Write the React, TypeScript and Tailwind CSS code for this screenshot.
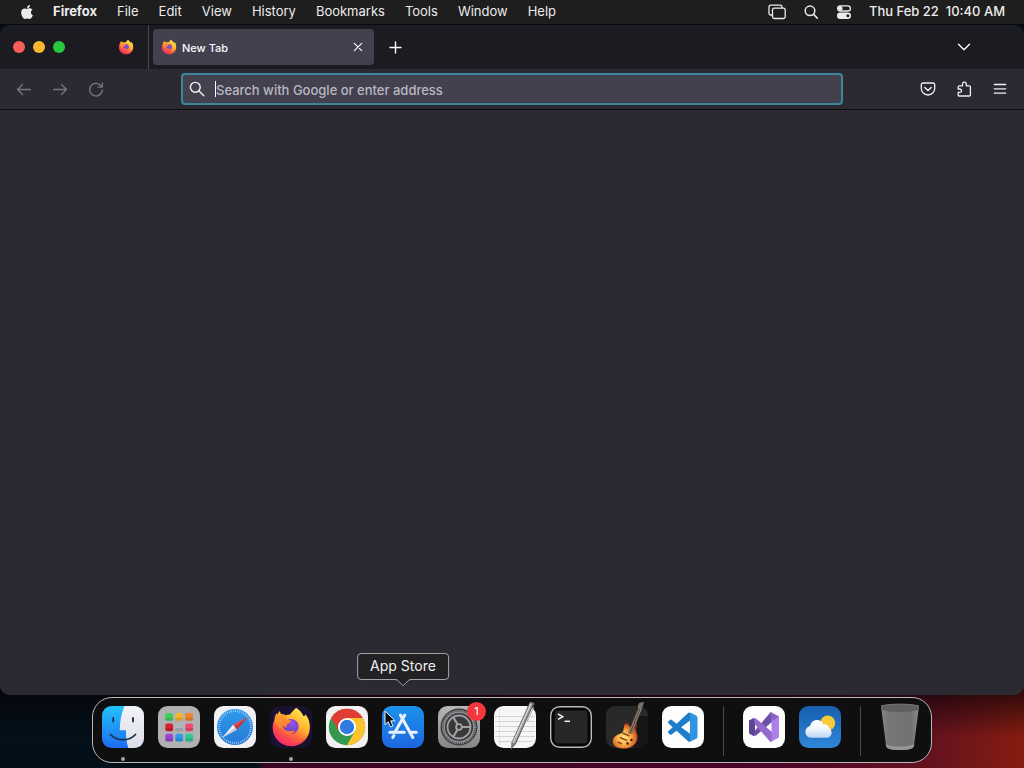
import { useId, type ReactNode } from "react";
import { FaApple } from "react-icons/fa";

const menus = ["File", "Edit", "View", "History", "Bookmarks", "Tools", "Window", "Help"];

function FirefoxLogo({ className }: { className: string }) {
  const id = useId();
  return (
    <svg viewBox="0 0 42 42" className={className} aria-hidden="true">
      <defs>
        <linearGradient id={id + "b"} x1="0.85" y1="0.1" x2="0.3" y2="0.95">
          <stop offset="0" stopColor="#ffe74a" />
          <stop offset="0.4" stopColor="#ffb02e" />
          <stop offset="0.7" stopColor="#ff5f3c" />
          <stop offset="1" stopColor="#f32c6c" />
        </linearGradient>
        <linearGradient id={id + "f"} x1="0.2" y1="0" x2="0.5" y2="1">
          <stop offset="0" stopColor="#ffa02b" />
          <stop offset="1" stopColor="#ff7a34" />
        </linearGradient>
        <radialGradient id={id + "p"} cx="0.6" cy="0.3" r="0.75">
          <stop offset="0" stopColor="#9a4fe6" />
          <stop offset="1" stopColor="#5a3fb8" />
        </radialGradient>
      </defs>
      <path
        d="M26 1.800c3.500 2.200 6.200 5.200 7.500 8.500 1-.5 1.800-1.100 2-2.100 3 3.600 4.400 8.200 4.400 13.300 0 10.500-8.300 18.700-18.600 18.700S2.700 32 2.700 21.800c0-3 .6-5.600 1.700-7.800 0-2.600.8-4.900 2.300-6.800l.8 1.200c.5-1.200 1.300-2.400 2.300-3.400.2 1.300.8 2.300 1.500 3.200 1.700-.2 3.200.2 4.500 1.100 1.200-.7 2.500-1 4.200-.900C21.500 6 24 4.500 26 1.800Z"
        fill={`url(#${id}b)`}
      />
      <path d="M3.500 17C3 31 12 37.500 21 37.500c7 0 12-3 15.500-8-2.500 6.500-8.500 10.700-15.200 10.700C11 40.200 2.700 32 2.700 21.800c0-1.800.3-3.400.8-4.800Z" fill="#f4325f" opacity="0.55" />
      <circle cx="21" cy="20.600" r="7.600" fill={`url(#${id}p)`} />
      <path
        d="M5 15.500c.5-3.800 3.300-6.900 6.300-7.300 2.200 0 4 .8 5.300 2.300-.6 1.500-.2 2.800.9 3.300l3 .4c1 .2.900 1.200.2 1.700l-3.500 2c-.8 1.500-.9 2.700-.4 4.100-1.800-.4-3-1.500-3.400-3-.8 1.300-.9 2.700-.4 4.300C8.500 22.500 5.500 19.500 5 15.500Z"
        fill={`url(#${id}f)`}
      />
      <path d="M12.500 20.500c1.500 3.700 5 5.200 8.500 4.500 1.800-.4 3.200-.2 4.300.3-2.500 3.200-7 4.300-10.500 1.700-2-1.500-2.800-4.200-2.300-6.500Z" fill="#ff7338" />
    </svg>
  );
}

function Finder() {
  return (
    <svg viewBox="0 0 42 42" className="size-full">
      <defs>
        <linearGradient id="finder-blue" x1="0" y1="0" x2="0" y2="1">
          <stop offset="0" stopColor="#22c3fb" />
          <stop offset="1" stopColor="#1d6cf2" />
        </linearGradient>
        <linearGradient id="finder-white" x1="0" y1="0" x2="0" y2="1">
          <stop offset="0" stopColor="#f3f3f7" />
          <stop offset="1" stopColor="#dcdee8" />
        </linearGradient>
        <clipPath id="finder-clip">
          <rect width="42" height="42" rx="9.500" />
        </clipPath>
      </defs>
      <g clipPath="url(#finder-clip)">
        <rect width="42" height="42" fill="url(#finder-blue)" />
        <path d="M22.500 0C19.500 7 18 14.500 17.800 23.500c0 .5.300.8.800.8H24c-.2 6 .6 12 2.200 17.700H42V0Z" fill="url(#finder-white)" />
      </g>
      <path d="M11.200 12v3.500" stroke="#12354f" strokeWidth="1.800" strokeLinecap="round" />
      <path d="M31 12v3.500" stroke="#1b2333" strokeWidth="1.800" strokeLinecap="round" />
      <path d="M8.500 28.500c6.500 7 18.500 7 25 0" fill="none" stroke="#15364f" strokeWidth="1.800" strokeLinecap="round" />
    </svg>
  );
}

const pads = ["#3fd158", "#f5b82e", "#f0872c", "#d6202c", "#aeb8ba", "#f24a72", "#9b45d0", "#2f9be8", "#30c795"];

function Launchpad() {
  return (
    <svg viewBox="0 0 42 42" className="size-full">
      <rect width="42" height="42" rx="9.500" fill="#b1b0b2" />
      {pads.map((color, i) => (
        <g key={color}>
          <rect x={7.300 + (i % 3) * 10} y={7 + Math.floor(i / 3) * 10.400} width="7.800" height="7.800" rx="2" fill={color} />
          <rect x={7.300 + (i % 3) * 10} y={11.500 + Math.floor(i / 3) * 10.400} width="7.800" height="3.300" rx="1.500" fill="#000" opacity="0.13" />
        </g>
      ))}
    </svg>
  );
}

function Safari() {
  return (
    <svg viewBox="0 0 42 42" className="size-full">
      <defs>
        <linearGradient id="safari-dial" x1="0" y1="0" x2="0" y2="1">
          <stop offset="0" stopColor="#2f9bea" />
          <stop offset="1" stopColor="#2779d6" />
        </linearGradient>
      </defs>
      <rect width="42" height="42" rx="9.500" fill="#f1f1f3" />
      <circle cx="21" cy="21" r="18" fill="url(#safari-dial)" />
      <circle cx="21" cy="21" r="16" fill="none" stroke="#d8ecff" strokeWidth="2" strokeDasharray="0.600 1.494" />
      <path d="M33.800 11 23 23.500 19 18.800Z" fill="#ea4a48" />
      <path d="M8.500 31.500 19 18.800l4 4.700Z" fill="#f4f6fa" />
      <path d="M8.500 31.500 21 21.100l2 2.400Z" fill="#c4cfdd" />
      <path d="M33.800 11 23 23.500 21 21.100Z" fill="#b93644" />
    </svg>
  );
}

function Chrome() {
  return (
    <svg viewBox="0 0 42 42" className="size-full">
      <rect width="42" height="42" rx="9.500" fill="#f2f1f0" />
      <circle cx="21" cy="21" r="18.200" fill="#34984f" />
      <path d="M36.800 12A18.200 18.200 0 0 1 20.900 39.200L28.800 25.500 21 12Z" fill="#fcc32c" />
      <path d="M5.200 12A18.200 18.200 0 0 1 36.800 12H21L13.200 25.500Z" fill="#e03e32" />
      <circle cx="21" cy="21" r="9" fill="#fff" />
      <circle cx="21" cy="21" r="7.200" fill="#2f79e4" />
    </svg>
  );
}

function AppStore() {
  return (
    <svg viewBox="0 0 42 42" className="size-full">
      <defs>
        <linearGradient id="store-blue" x1="0" y1="0" x2="0" y2="1">
          <stop offset="0" stopColor="#1c92ea" />
          <stop offset="1" stopColor="#1d66e0" />
        </linearGradient>
      </defs>
      <rect width="42" height="42" rx="9.500" fill="url(#store-blue)" />
      <g stroke="#eaf2fd" strokeWidth="3" strokeLinecap="round">
        <path d="M22.800 9 13.600 25" />
        <path d="M18.400 9 30.800 31.500" />
        <path d="M7.800 26.200h14.400" />
        <path d="M29.300 26.200h4.900" />
        <path d="M11.900 29.600 10.800 31.500" />
      </g>
    </svg>
  );
}

function Settings() {
  return (
    <svg viewBox="0 0 42 42" className="size-full">
      <defs>
        <linearGradient id="settings-bg" x1="0" y1="0" x2="0" y2="1">
          <stop offset="0" stopColor="#b6b7b9" />
          <stop offset="1" stopColor="#858688" />
        </linearGradient>
      </defs>
      <rect width="42" height="42" rx="9.500" fill="url(#settings-bg)" />
      <circle cx="21" cy="21" r="18.500" fill="#38393b" />
      <circle cx="21" cy="21" r="16.300" fill="none" stroke="#8f9092" strokeWidth="2" strokeDasharray="1.200 0.848" />
      <circle cx="21" cy="21" r="14.800" fill="none" stroke="#8f9092" strokeWidth="1.400" />
      <circle cx="21" cy="21" r="11.500" fill="none" stroke="#a0a1a3" strokeWidth="1.800" />
      <path d="M21 21h11M21 21l-5.500-9.500M21 21l-5.500 9.500" stroke="#a0a1a3" strokeWidth="2.200" />
      <circle cx="21" cy="21" r="3.800" fill="#a0a1a3" />
      <circle cx="21" cy="21" r="1.900" fill="#38393b" />
    </svg>
  );
}

function TextEdit() {
  return (
    <svg viewBox="0 0 42 42" className="size-full overflow-visible">
      <rect width="42" height="42" rx="9.500" fill="#f6f6f6" />
      <g stroke="#c9cace" strokeWidth="0.800">
        <path d="M1 10.500h40M1 15.500h40M1 20.500h40M1 25.500h40M1 30.500h40M4 35.500h34" />
        <path d="M5.500 3v36" stroke="#dcdcde" />
      </g>
      <path d="M37.800-3 19.600 37.500" stroke="#5f6164" strokeWidth="4.600" />
      <path d="M37.600-3 19.400 37.500" stroke="#a4a6a9" strokeWidth="2.800" />
      <path d="M37-2.500 18.800 37" stroke="#d6d7d9" strokeWidth="1.100" />
      <path d="m17.400 36.200 4.300 2L16.800 44Z" fill="#77797c" />
      <path d="m36.200-4.400 4 1.500.3 2-2 .3" fill="#6e7073" />
      <path d="m39.500 1-6.200 14.500" stroke="#b6b8ba" strokeWidth="1.200" />
    </svg>
  );
}

function Terminal() {
  return (
    <svg viewBox="0 0 42 42" className="size-full">
      <rect x="0.700" y="0.700" width="40.600" height="40.600" rx="9" fill="#050505" stroke="#b9babb" strokeWidth="1.400" />
      <rect x="4.500" y="4.500" width="33" height="33" rx="4" fill="#262728" />
      <path d="m8 8 4.800 2.700L8 13.400" fill="none" stroke="#f2f2f2" strokeWidth="1.500" />
      <path d="M14.500 15.300h5.500" stroke="#f2f2f2" strokeWidth="1.500" />
    </svg>
  );
}

function GarageBand() {
  return (
    <svg viewBox="0 0 42 42" className="size-full overflow-visible">
      <defs>
        <radialGradient id="guitar" cx="0.450" cy="0.580" r="0.600">
          <stop offset="0" stopColor="#ffe98a" />
          <stop offset="0.500" stopColor="#f9a83c" />
          <stop offset="0.850" stopColor="#d0552a" />
          <stop offset="1" stopColor="#7d2616" />
        </radialGradient>
      </defs>
      <rect width="42" height="42" rx="9.500" fill="#29292a" />
      <path d="M32 10h10v22.500a9.500 9.500 0 0 1-9.500 9.500H27Z" fill="#161617" />
      <path
        d="M19.500 17.500c2-1.500 3.600.5 3.800 3.300 2-.3 3.700-1.500 4.900-3.500 2-.8 3.600 1 2.800 3.200-1.800 4.200-.4 5.800.4 8.800 1.200 7-4.900 13.200-12.400 13.200C12 42.500 7 41 6.800 35.500c-.1-4.500 3.500-6.500 7.900-8 4.600-1.600 1.800-7.500 4.800-10Z"
        fill="url(#guitar)"
      />
      <path d="M22 27 32.500 1.500l3.300 1.200L26 28Z" fill="#59483c" />
      <path d="M31.500.8 33-3l5-1.200-1.600 6-2 1.700Z" fill="#77706b" />
      <path d="M23 27 33.500 1.500M25.200 27.500 35.300 2.500" stroke="#b3a591" strokeWidth="0.700" />
      <path d="m16.500 27 7 3M14 31.500l7 3M11.500 36l4.500 2" stroke="#8d4a22" strokeWidth="1.500" />
      <circle cx="25.500" cy="34" r="1.200" fill="#2c1712" />
      <circle cx="21.500" cy="37.500" r="1.200" fill="#2c1712" />
    </svg>
  );
}

function VsCode() {
  return (
    <svg viewBox="0 0 42 42" className="size-full">
      <rect width="42" height="42" rx="9.500" fill="#fdfdfd" />
      <g transform="translate(6 6.500) scale(1.220)">
        <path
          fill="#1e7dc8"
          d="M23.150 2.587 18.210.210a1.494 1.494 0 0 0-1.705.290l-9.460 8.630-4.120-3.128a.999.999 0 0 0-1.276.057L.327 7.261A1 1 0 0 0 .326 8.740L3.899 12 .326 15.260a1 1 0 0 0 .001 1.479L1.650 17.940a.999.999 0 0 0 1.276.057l4.120-3.128 9.460 8.630a1.492 1.492 0 0 0 1.704.290l4.942-2.377A1.500 1.500 0 0 0 24 20.060V3.939a1.500 1.500 0 0 0-.850-1.352zm-5.146 14.861L10.826 12l7.178-5.448v10.896z"
        />
        <path fill="#2f95e2" d="M18 .150v23.700l5.150-2.437A1.500 1.500 0 0 0 24 20.060V3.939a1.500 1.500 0 0 0-.850-1.352Z" />
      </g>
    </svg>
  );
}

function VisualStudio() {
  return (
    <svg viewBox="0 0 42 42" className="size-full">
      <rect width="42" height="42" rx="9.500" fill="#fdfdfd" />
      <path d="M6 14.500 10.500 12l1.500 1v16l-1.500 1L6 27.500Z" fill="#5d4591" />
      <path d="M10.500 30 12 24.500 27.500 6.300l2.500 1V15L13 29.500Z" fill="#6c50a8" />
      <path d="M10.500 12 13 12.500 30 27v8l-2.500 1L12 18.500Z" fill="#9369cd" />
      <path d="M27.500 6.300 36 10.500v21l-8.500 4.500 1-2V8.500Z" fill="#ad80e8" />
      <path d="M27.500 6.300 36 10.500l-7.500 5Z" fill="#8a64c2" />
    </svg>
  );
}

function Weather() {
  return (
    <svg viewBox="0 0 42 42" className="size-full">
      <defs>
        <linearGradient id="weather-sky" x1="0" y1="0" x2="0" y2="1">
          <stop offset="0" stopColor="#175fae" />
          <stop offset="1" stopColor="#2e86d8" />
        </linearGradient>
        <linearGradient id="weather-cloud" x1="0" y1="0" x2="0" y2="1">
          <stop offset="0" stopColor="#ffffff" />
          <stop offset="0.500" stopColor="#f3f6fd" />
          <stop offset="1" stopColor="#b9d4f6" />
        </linearGradient>
      </defs>
      <rect width="42" height="42" rx="9.500" fill="url(#weather-sky)" />
      <circle cx="28.700" cy="17" r="7.500" fill="#f6cb38" />
      <path
        d="M12.200 31.800a5.900 5.900 0 0 1-1-11.700c.6-3.700 3.300-6 6.700-6 3.200 0 5.400 1.700 6.500 4.300 3.300-.4 6 1.800 6.300 4.700 1.300.8 1.900 2 1.900 3.600 0 2.800-2.100 5.100-5.100 5.100Z"
        fill="url(#weather-cloud)"
      />
    </svg>
  );
}

function Trash() {
  return (
    <svg viewBox="0 0 42 42" className="size-full overflow-visible">
      <defs>
        <linearGradient id="trash-body" x1="0" y1="0" x2="1" y2="0">
          <stop offset="0" stopColor="#858887" />
          <stop offset="0.200" stopColor="#747776" />
          <stop offset="0.800" stopColor="#707372" />
          <stop offset="1" stopColor="#8b8e8d" />
        </linearGradient>
      </defs>
      <path d="M1 0 6 39.500C6.400 43 11 44 20 44s13.600-1 14-4.500L39 0Z" fill="url(#trash-body)" />
      <path d="M1 0C9-2.500 31-2.500 39 0l-.6 4c-9 2.500-27.800 2.500-36.800 0Z" fill="#5d605f" />
      <path d="M1 0C9-2.500 31-2.500 39 0" fill="none" stroke="#7f8281" strokeWidth="0.900" />
      <path d="M5.800 38c5 3.500 23.400 3.500 28.400 0L34 39.500C33.600 43 29 44 20 44S6.400 43 6 39.500Z" fill="#949796" />
    </svg>
  );
}

function DockItem({ name, running, children }: { name: string; running?: boolean; children: ReactNode }) {
  return (
    <div className="relative flex flex-col items-center">
      <button type="button" aria-label={name} className="size-[42px]">
        {children}
      </button>
      {running && <span className="mt-[9px] size-1 rounded-full bg-[#a5a5a5]" />}
    </div>
  );
}

function Divider() {
  return <span className="mx-[5px] h-[50px] w-px bg-[#4a4a4b]" />;
}

function ToolButton({ label, dim, children }: { label: string; dim?: boolean; children: ReactNode }) {
  return (
    <button
      type="button"
      aria-label={label}
      className={`flex h-8 w-9 items-center justify-center ${dim ? "text-[#77767e]" : "text-[#f0f0f2]"}`}
    >
      <svg viewBox="0 0 16 16" className="size-4" fill="none" stroke="currentColor" strokeWidth="1.300" strokeLinecap="round" strokeLinejoin="round">
        {children}
      </svg>
    </button>
  );
}

function MenuBar() {
  return (
    <header className="flex h-6 shrink-0 items-center justify-between bg-[#1e1e1e] px-[19px] text-[13px] text-[#ececec]">
      <nav className="flex items-center gap-5">
        <button type="button" aria-label="Apple menu" className="w-3.5">
          <FaApple className="size-4" />
        </button>
        <button type="button" className="font-bold">Firefox</button>
        {menus.map((menu) => (
          <button key={menu} type="button">
            {menu}
          </button>
        ))}
      </nav>
      <div className="flex items-center gap-[17px]">
        <button type="button" aria-label="Screen mirroring">
          <svg viewBox="0 0 18 16" className="h-4 w-[18px]" fill="none" stroke="currentColor" strokeWidth="1.300">
            <path d="M4.500 11H2.800A1.800 1.800 0 0 1 1 9.200V3a1.800 1.800 0 0 1 1.800-1.800h9.400A1.800 1.800 0 0 1 14 3v1" />
            <rect x="4.500" y="4.200" width="12.700" height="10.300" rx="1.800" />
          </svg>
        </button>
        <button type="button" aria-label="Spotlight">
          <svg viewBox="0 0 16 16" className="size-4" fill="none" stroke="currentColor" strokeWidth="1.500" strokeLinecap="round">
            <circle cx="7" cy="6.800" r="4.800" />
            <path d="m10.600 10.400 3.700 3.700" />
          </svg>
        </button>
        <button type="button" aria-label="Control Center">
          <svg viewBox="0 0 16 16" className="size-4">
            <rect x="1.600" y="1.800" width="12.800" height="5.200" rx="2.600" fill="none" stroke="currentColor" strokeWidth="1.300" />
            <circle cx="4.300" cy="4.400" r="2.300" fill="currentColor" />
            <rect x="1" y="8.500" width="14" height="6.500" rx="3.250" fill="currentColor" />
            <circle cx="11.900" cy="11.750" r="1.500" fill="#1e1e1e" />
          </svg>
        </button>
        <time className="font-medium whitespace-pre">Thu Feb 22  10:40 AM</time>
      </div>
    </header>
  );
}

function TabStrip() {
  return (
    <div className="flex h-11 shrink-0 items-stretch bg-[#1c1b21] text-[#fbfbfe]">
      <div className="flex flex-1 items-stretch">
        <div className="flex items-center gap-2 pl-[13px]">
          <button type="button" aria-label="Close window" className="size-3 rounded-full bg-[#fa5e57]" />
          <button type="button" aria-label="Minimize window" className="size-3 rounded-full bg-[#fbb72e]" />
          <button type="button" aria-label="Zoom window" className="size-3 rounded-full bg-[#28c83f]" />
        </div>
        <button type="button" aria-label="Firefox View" className="ml-[53px] flex items-center">
          <FirefoxLogo className="size-4" />
        </button>
        <span className="ml-3.5 w-px bg-[#4b4a50]" />
        <div className="my-1 ml-1 flex w-[221px] items-center gap-[5px] rounded bg-[#43414e] px-2">
          <FirefoxLogo className="size-4" />
          <span className="flex-1 pt-0.5 text-[11px] font-medium">New Tab</span>
          <button type="button" aria-label="Close tab" className="flex size-4 items-center justify-center">
            <svg viewBox="0 0 16 16" className="size-4" stroke="currentColor" strokeWidth="1.200" strokeLinecap="round">
              <path d="m4.300 4.300 7.400 7.400M11.700 4.300l-7.400 7.400" />
            </svg>
          </button>
        </div>
        <button type="button" aria-label="Open a new tab" className="ml-3.5 flex items-center">
          <svg viewBox="0 0 16 16" className="size-4" stroke="currentColor" strokeWidth="1.400" strokeLinecap="round">
            <path d="M7.500 3v11M2 8.500h11" />
          </svg>
        </button>
      </div>
      <button type="button" aria-label="List all tabs" className="mr-13 flex items-center">
        <svg viewBox="0 0 16 16" className="size-4" fill="none" stroke="currentColor" strokeWidth="1.400" strokeLinecap="round" strokeLinejoin="round">
          <path d="m2.500 5.300 5.500 5.400 5.500-5.400" />
        </svg>
      </button>
    </div>
  );
}

function NavBar() {
  return (
    <div className="flex h-[41px] shrink-0 items-center border-b border-[#0e0d12] bg-[#2b2a33] px-1.5">
      <ToolButton label="Back" dim>
        <path d="M14.500 8.500h-13M6.500 3.500l-5 5 5 5" />
      </ToolButton>
      <ToolButton label="Forward" dim>
        <path d="M1.500 8.500h13M9.500 3.500l5 5-5 5" />
      </ToolButton>
      <ToolButton label="Reload" dim>
        <path d="M14.300 9A6.300 6.300 0 1 1 12.500 4.300L14 5.800M14.300 2v4.200H10" />
      </ToolButton>
      <label className="mx-[67px] flex h-8 flex-1 items-center rounded border-2 border-[#3a8799] bg-[#43414e] pl-1.5 text-[#f5f5f8]">
        <svg viewBox="0 0 16 16" className="size-4" fill="none" stroke="currentColor" strokeWidth="1.400" strokeLinecap="round">
          <circle cx="6.300" cy="6.300" r="4.900" />
          <path d="m10 10 4.800 4.800" />
        </svg>
        <span className="ml-2.5 h-4 w-px bg-[#fbfbfe]" />
        <input
          type="text"
          aria-label="Search with Google or enter address"
          placeholder="Search with Google or enter address"
          className="h-full min-w-0 flex-1 bg-transparent pt-0.5 text-[13px] font-medium outline-none placeholder:text-[#b9b8c2]"
        />
      </label>
      <ToolButton label="Save to Pocket">
        <path d="M3 2h10a1.700 1.700 0 0 1 1.700 1.700V7.300a6.700 6.700 0 0 1-13.400 0V3.700A1.700 1.700 0 0 1 3 2Z" />
        <path d="m4.800 6.500 3.200 3 3.200-3" strokeWidth="1.500" />
      </ToolButton>
      <ToolButton label="Extensions">
        <path d="M2.200 8V5.800a1 1 0 0 1 1-1h3.300V3a1.900 1.900 0 0 1 3.800 0v1.800h3.100a1 1 0 0 1 1 1v8.200a1 1 0 0 1-1 1H3.200a1 1 0 0 1-1-1v-2.600h1.600a1.700 1.700 0 0 0 0-3.400Z" />
      </ToolButton>
      <ToolButton label="Open application menu">
        <path d="M2.300 3.500h11.400M2.300 7.800h11.400M2.300 12.100h11.400" />
      </ToolButton>
    </div>
  );
}

function Dock() {
  return (
    <footer className="mx-auto mt-0.5 mb-[5px] flex h-[66px] items-start gap-3.5 rounded-[20px] border border-[#b8b8ba] bg-[#0f0f10] px-[9px] pt-2">
      <DockItem name="Finder" running><Finder /></DockItem>
      <DockItem name="Launchpad"><Launchpad /></DockItem>
      <DockItem name="Safari"><Safari /></DockItem>
      <DockItem name="Firefox" running>
        <span className="flex size-full items-center justify-center rounded-[10px] bg-[#1a1030]">
          <FirefoxLogo className="size-[42px]" />
        </span>
      </DockItem>
      <DockItem name="Chrome"><Chrome /></DockItem>
      <div className="relative">
        <DockItem name="App Store"><AppStore /></DockItem>
        <div role="tooltip" className="absolute bottom-full left-1/2 mb-[26px] -translate-x-1/2 rounded border border-[#a3a3a7] bg-[#222225] px-3 pb-px text-sm leading-6 whitespace-nowrap text-[#f1f1f1]">
          App Store
          <svg viewBox="0 0 18 8" className="absolute top-full left-1/2 h-2 w-[18px] -translate-x-1/2">
            <path d="M0 0h18c-3 0-4 1.500-5.300 3L9 6.800 5.300 3C4 1.500 3 0 0 0Z" fill="#222225" />
            <path d="M0 .500c3 0 4 1 5.300 2.500L9 6.800 12.700 3C14 1.500 15 .500 18 .500" fill="none" stroke="#a3a3a7" />
          </svg>
        </div>
        <svg viewBox="0 0 12 18" className="absolute top-1 left-0.5 h-[18px] w-3">
          <path d="M1 1v13.700l3.200-3 2.200 5.300 2.500-1-2.200-5.200h4.400Z" fill="#080808" stroke="#e9eef5" strokeWidth="1" />
        </svg>
      </div>
      <div className="relative">
        <DockItem name="System Settings"><Settings /></DockItem>
        <span className="absolute -top-1 -right-1.5 flex size-[19px] items-center justify-center rounded-full bg-[#f2383c] text-[11px] text-white">1</span>
      </div>
      <DockItem name="TextEdit"><TextEdit /></DockItem>
      <DockItem name="Terminal"><Terminal /></DockItem>
      <DockItem name="GarageBand"><GarageBand /></DockItem>
      <DockItem name="Visual Studio Code"><VsCode /></DockItem>
      <Divider />
      <DockItem name="Visual Studio"><VisualStudio /></DockItem>
      <DockItem name="Weather"><Weather /></DockItem>
      <Divider />
      <DockItem name="Trash"><Trash /></DockItem>
    </footer>
  );
}

export default function App() {
  return (
    <div className="flex min-h-screen flex-col bg-[#020d18] bg-[linear-gradient(180deg,#050b14_0%,#050b14_50%,#080206b0_90%,#08020600_96%),linear-gradient(90deg,#03101a_0%,#03101a_25%,#3a0525_26%,#4a0528_75%,#64121f_91%,#861d10_100%)] font-['Inter','Liberation_Sans',sans-serif]">
      <div className="pb-px">
        <MenuBar />
      </div>
      <main className="flex flex-1 flex-col overflow-hidden rounded-[10px] bg-[#2b2a33]">
        <TabStrip />
        <NavBar />
        <div className="flex-1 bg-[#2b2a33]" />
      </main>
      <Dock />
    </div>
  );
}
